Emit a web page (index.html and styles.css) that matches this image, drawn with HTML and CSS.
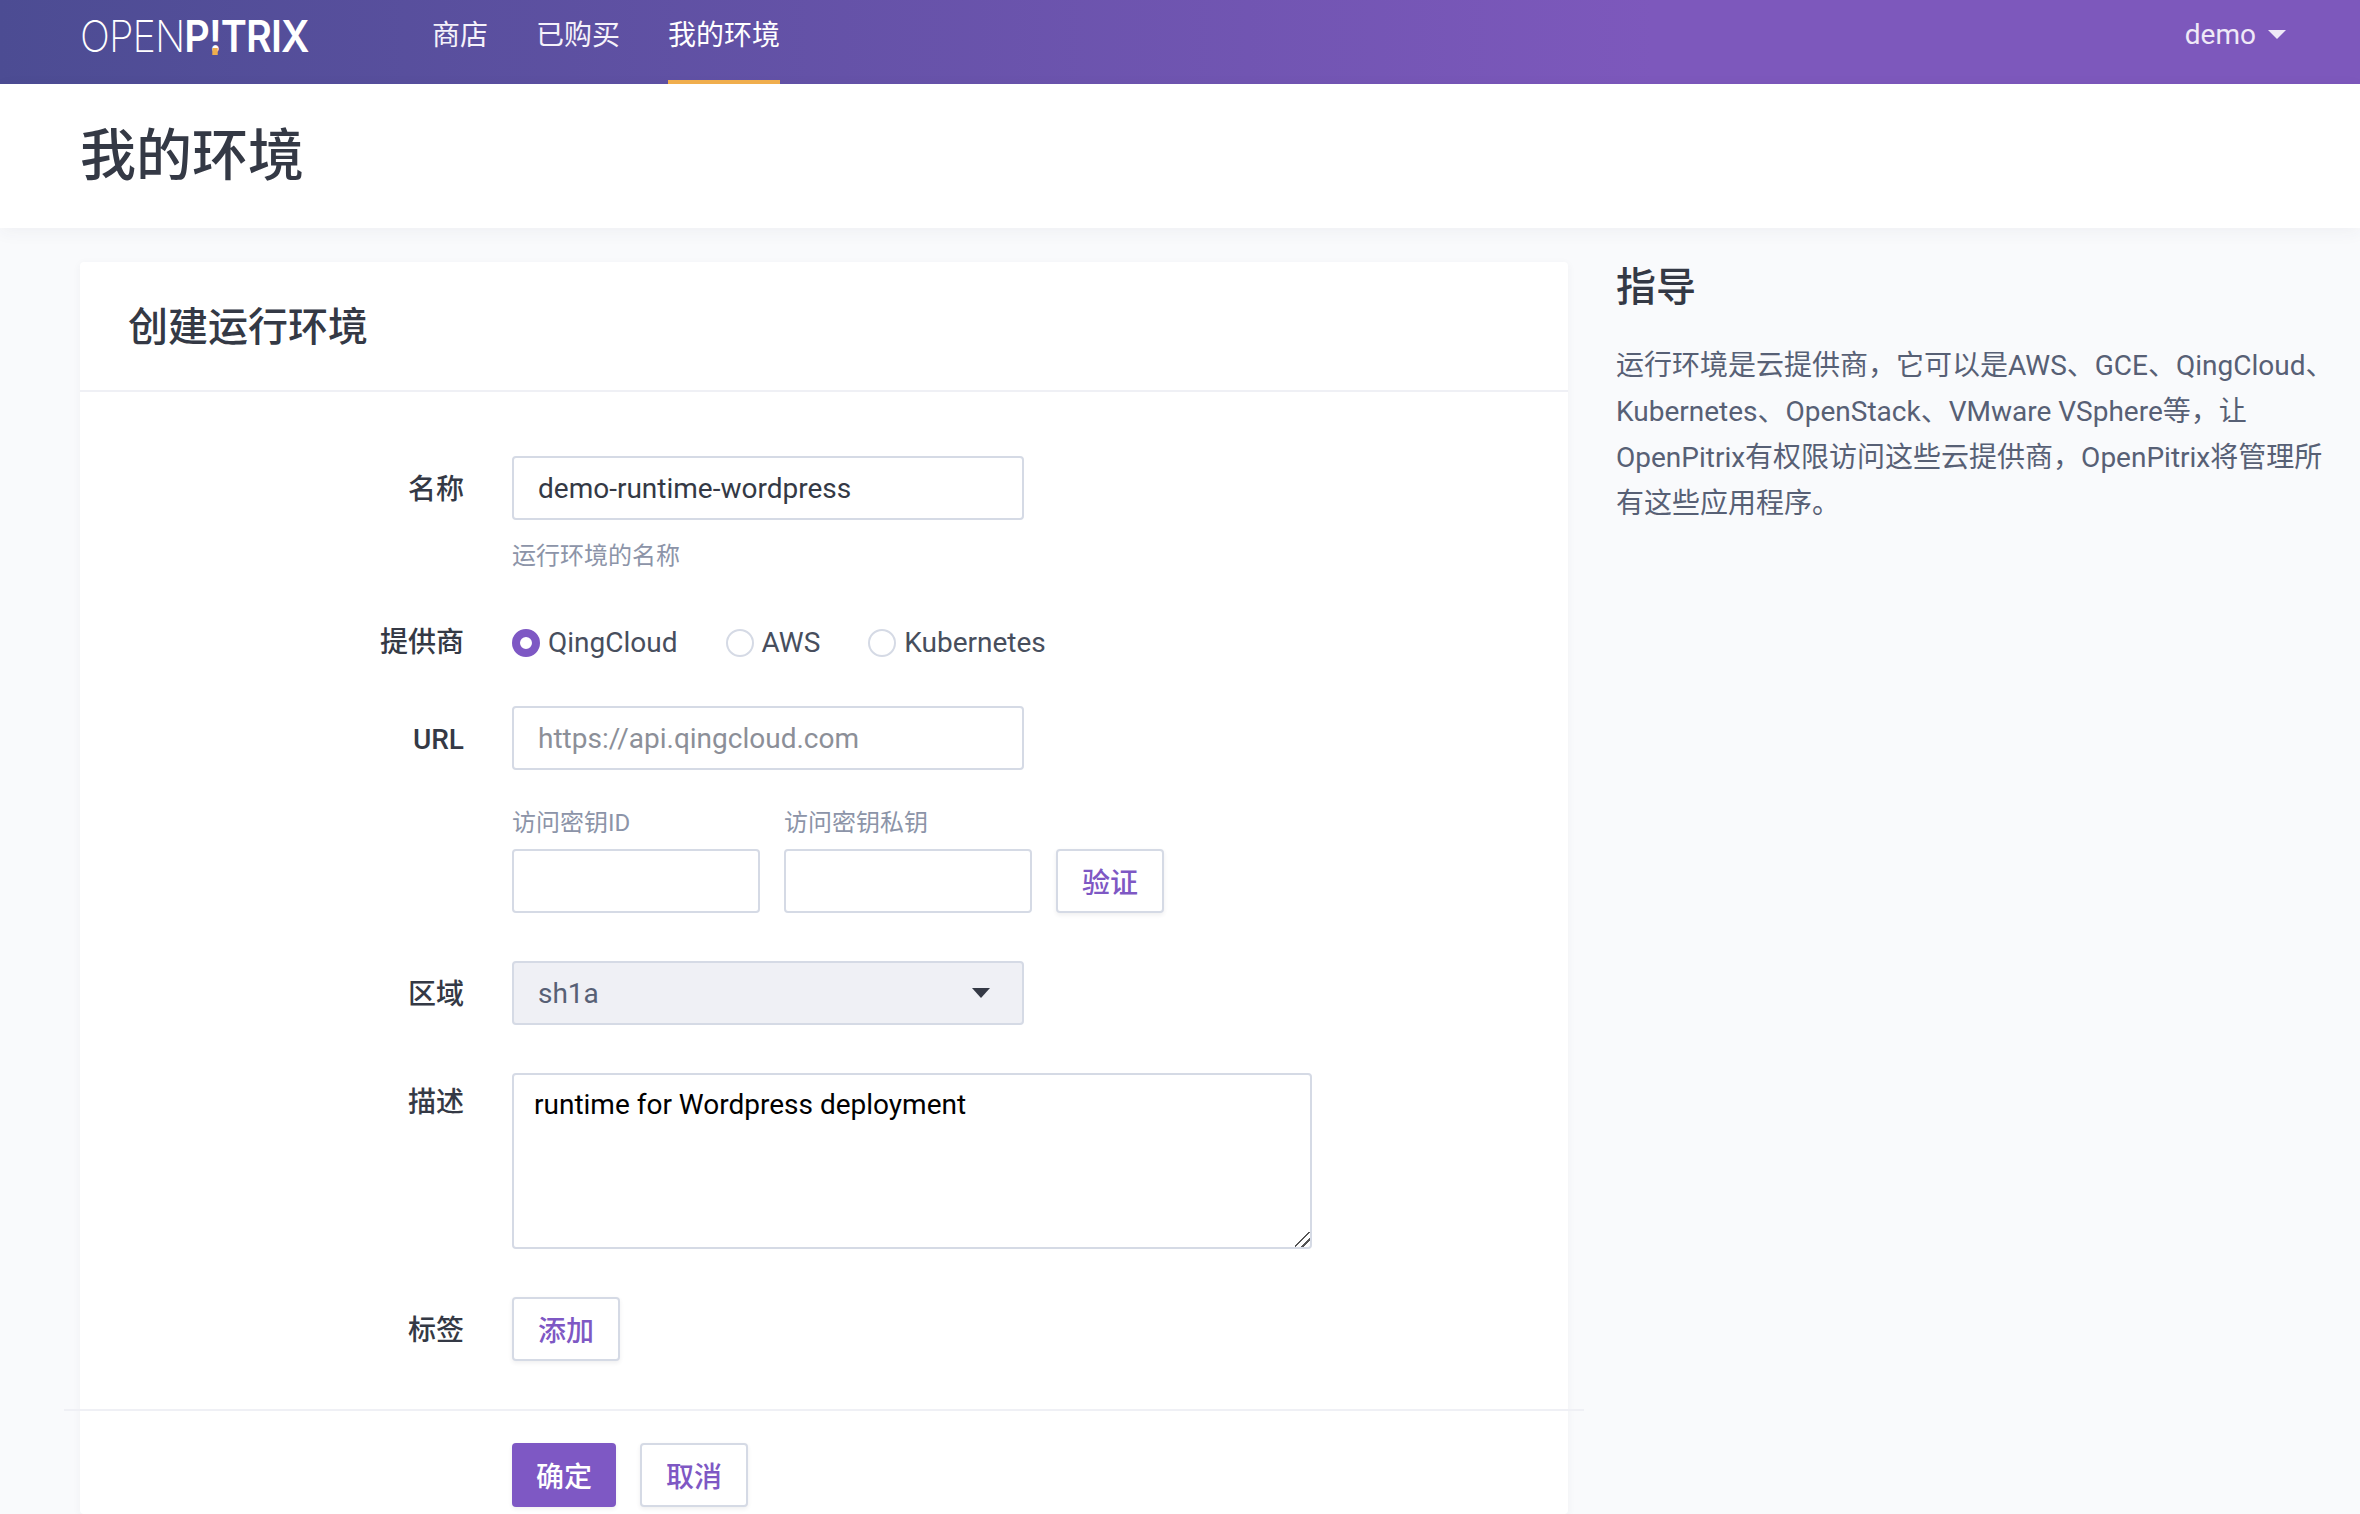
FILE: index.html
```html
<!DOCTYPE html>
<html lang="zh-CN">
<head>
    <meta charset="UTF-8"/>
    <title>我的环境 – OpenPitrix</title>
    <link rel="stylesheet" href="styles.css">
</head>
<body>

<header class="topbar">
    <div class="logo-box">
        <div class="logo"><span class="logo-thin">OPEN</span><span class="logo-bold">P<span class="logo-bang">!</span>TRIX</span></div>
    </div>
    <nav class="topnav">
        <a href="#">商店</a>
        <a href="#">已购买</a>
        <a href="#" class="active">我的环境</a>
    </nav>
    <div class="user">demo<span class="caret"></span></div>
</header>

<div class="page-title">
    <h1>我的环境</h1>
</div>

<main class="content">
    <section class="card">
        <h2 class="card-title">创建运行环境</h2>
        <form class="form">
            <div class="row row-name">
                <label class="label">名称</label>
                <div class="field">
                    <input class="input" type="text" value="demo-runtime-wordpress">
                    <p class="hint">运行环境的名称</p>
                </div>
            </div>
            <div class="row row-provider">
                <label class="label">提供商</label>
                <div class="radios">
                    <span class="radio checked"><i></i>QingCloud</span>
                    <span class="radio"><i></i>AWS</span>
                    <span class="radio"><i></i>Kubernetes</span>
                </div>
            </div>
            <div class="row row-url">
                <label class="label">URL</label>
                <input class="input" type="text" placeholder="https://api.qingcloud.com">
            </div>
            <div class="row row-keys">
                <label class="label"></label>
                <div class="keys">
                    <div class="key">
                        <span class="key-label">访问密钥ID</span>
                        <input class="input" type="text">
                    </div>
                    <div class="key">
                        <span class="key-label">访问密钥私钥</span>
                        <input class="input" type="text">
                    </div>
                    <button class="btn" type="button">验证</button>
                </div>
            </div>
            <div class="row row-zone">
                <label class="label">区域</label>
                <div class="select">sh1a<span class="select-caret"></span></div>
            </div>
            <div class="row row-desc">
                <label class="label">描述</label>
                <textarea class="textarea">runtime for Wordpress deployment</textarea>
            </div>
            <div class="row row-tags">
                <label class="label">标签</label>
                <button class="btn" type="button">添加</button>
            </div>
            <div class="actions">
                <button class="btn btn-primary" type="button">确定</button>
                <button class="btn" type="button">取消</button>
            </div>
        </form>
    </section>
    <aside class="guide">
        <h3>指导</h3>
        <p>运行环境是云提供商，它可以是AWS、GCE、QingCloud、Kubernetes、OpenStack、VMware VSphere等，让OpenPitrix有权限访问这些云提供商，OpenPitrix将管理所有这些应用程序。</p>
    </aside>
</main>

</body>
</html>
```

FILE: styles.css
```css
* {
    box-sizing: border-box;
}

html, body {
    height: 100%;
}

body {
    margin: 0;
    overflow: hidden;
    font-family: Roboto, "Noto Sans CJK SC", sans-serif;
    font-size: 28px;
    color: #343945;
    background-color: #f9fafc;
}

.topbar {
    display: flex;
    align-items: flex-start;
    height: 84px;
    padding-left: 80px;
    padding-right: 74px;
    color: #fff;
    background: linear-gradient(90deg, #4c4c93 0%, #7d58bc 70%, #7d58bc 100%);
}

.logo-box {
    flex: none;
    width: 352px;
}

.logo {
    margin-top: 12px;
    font-family: Inter, sans-serif;
    font-size: 44px;
    line-height: 48px;
    letter-spacing: -1px;
    white-space: nowrap;
    transform: scaleX(0.9);
    transform-origin: left center;
}

.logo-thin {
    font-weight: 200;
}

.logo-bold {
    font-weight: 600;
}

.logo-bang {
    position: relative;
}

.logo-bang::after {
    content: "";
    position: absolute;
    left: 4px;
    bottom: 8px;
    width: 6px;
    height: 7px;
    background: #f0ae4d;
}

.topnav {
    display: flex;
    gap: 48px;
}

.topnav a {
    display: block;
    height: 84px;
    padding-top: 16px;
    line-height: 40px;
    color: #f5f2fa;
    text-decoration: none;
}

.topnav a.active {
    color: #fff;
    border-bottom: 4px solid #f0ae4d;
}

.user {
    display: flex;
    align-items: center;
    margin-left: auto;
    height: 68px;
    color: #efe9f7;
}

.caret {
    width: 0;
    height: 0;
    margin-left: 12px;
    border-left: 9px solid transparent;
    border-right: 9px solid transparent;
    border-top: 9px solid #efe9f7;
}

.page-title {
    height: 144px;
    padding: 38px 80px 0;
    background: #fff;
    box-shadow: 0 4px 16px rgba(52, 57, 69, 0.05);
}

.page-title h1 {
    margin: 0;
    font-size: 56px;
    font-weight: 500;
    line-height: 68px;
}

.content {
    display: flex;
    gap: 48px;
    padding: 34px 16px 0 80px;
}

.card {
    flex: none;
    width: 1488px;
    padding-bottom: 7px;
    background: #fff;
    border-radius: 4px;
    box-shadow: 0 2px 8px rgba(52, 57, 69, 0.05);
}

.card-title {
    height: 130px;
    margin: 0;
    padding: 0 48px;
    font-size: 40px;
    font-weight: 500;
    line-height: 132px;
    border-bottom: 2px solid #eff0f5;
}

.form {
    padding-top: 64px;
}

.row {
    display: flex;
    align-items: flex-start;
    gap: 48px;
    margin-bottom: 48px;
}

.label {
    flex: none;
    width: 384px;
    height: 64px;
    padding-top: 2px;
    line-height: 64px;
    font-weight: 500;
    text-align: right;
}

.field {
    width: 512px;
}

.input {
    display: block;
    width: 512px;
    height: 64px;
    padding: 0 24px;
    font: inherit;
    color: #343945;
    background: #fff;
    border: 2px solid #d5dae5;
    border-radius: 4px;
    outline: none;
}

.input::placeholder {
    color: #8c8f98;
}

.hint {
    margin: 18px 0 0;
    font-size: 24px;
    line-height: 36px;
    color: #8c94a8;
}

.row-name {
    margin-bottom: 35px;
}

.row-provider {
    margin-bottom: 31px;
}

.row-url {
    margin-bottom: 35px;
}

.row-desc .label {
    padding-top: 0;
    line-height: 60px;
}

.radios {
    display: flex;
    gap: 48px;
    padding-top: 2px;
    line-height: 64px;
}

.radio {
    display: flex;
    align-items: center;
    gap: 8px;
    color: #474e5d;
}

.radio i {
    width: 28px;
    height: 28px;
    border: 2px solid #d5dae5;
    border-radius: 50%;
    background: #fff;
}

.radio.checked i {
    border: 8px solid #7e58c4;
}

.keys {
    display: flex;
    align-items: flex-end;
    gap: 24px;
}

.key {
    width: 248px;
}

.key .input {
    width: 248px;
}

.key-label {
    display: block;
    margin-bottom: 8px;
    font-size: 24px;
    line-height: 36px;
    color: #8c94a8;
}

.btn {
    height: 64px;
    padding: 0 24px;
    font: inherit;
    font-weight: 500;
    color: #7e58c4;
    background: #fff;
    border: 2px solid #d5dae5;
    border-radius: 4px;
    box-shadow: 0 2px 4px rgba(52, 57, 69, 0.08);
}

.btn-primary {
    color: #fff;
    background: #7e58c4;
    border: 0;
}

.select {
    display: flex;
    align-items: center;
    justify-content: space-between;
    width: 512px;
    height: 64px;
    padding: 0 32px 0 24px;
    color: #576075;
    background: #eff0f5;
    border: 2px solid #d5dae5;
    border-radius: 4px;
}

.select-caret {
    width: 0;
    height: 0;
    border-left: 9px solid transparent;
    border-right: 9px solid transparent;
    border-top: 10px solid #343945;
}

.textarea {
    display: block;
    width: 800px;
    height: 176px;
    padding: 13px 20px;
    font: inherit;
    color: #000;
    border: 2px solid #d5dae5;
    border-radius: 4px;
    outline: none;
}

.textarea::-webkit-resizer {
    background: linear-gradient(135deg, transparent 44%, #555 44%, #555 52%, transparent 52%, transparent 70%, #555 70%, #555 78%, transparent 78%);
}

.actions {
    display: flex;
    gap: 24px;
    margin: 0 -16px;
    padding: 32px 0 0 448px;
    border-top: 2px solid #eff0f5;
}

.guide h3 {
    margin: 0;
    font-size: 40px;
    font-weight: 500;
    line-height: 52px;
}

.guide p {
    margin: 29px 0 0;
    line-height: 46px;
    color: #576075;
}
```
